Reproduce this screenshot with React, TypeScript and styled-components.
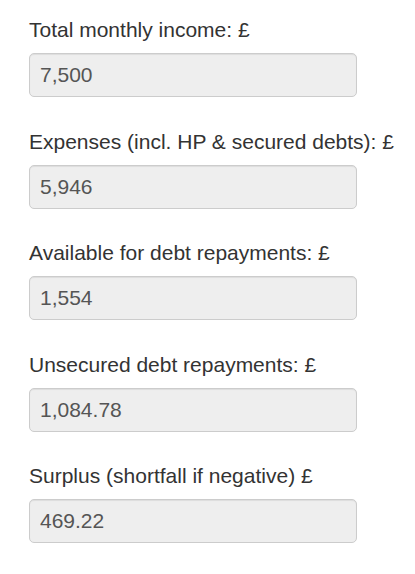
import styled, {createGlobalStyle} from "styled-components";

const GlobalStyle = createGlobalStyle`
  body {
    margin: 0;
    background-color: #ffffff;
    font-family: "Liberation Sans", Arial, sans-serif;
  }
`;

const fields = [
  {label: "Total monthly income: £", value: "7,500"},
  {label: "Expenses (incl. HP & secured debts): £", value: "5,946"},
  {label: "Available for debt repayments: £", value: "1,554"},
  {label: "Unsecured debt repayments: £", value: "1,084.78"},
  {label: "Surplus (shortfall if negative) £", value: "469.22"},
];

const App = () => {
  return (
    <>
      <GlobalStyle />
      <Form>
        {fields.map((field) => (
          <FormGroup key={field.label}>
            <Label>{field.label}</Label>
            <ReadonlyInput type="text" value={field.value} readOnly />
          </FormGroup>
        ))}
      </Form>
    </>
  );
};

const Form = styled.form`
  display: flex;
  flex-direction: column;
  gap: 32.5px;
  padding: 18px 0 0 29px;
`;

const FormGroup = styled.div`
  display: flex;
  flex-direction: column;
  gap: 11px;
`;

const Label = styled.label`
  font-size: 21px;
  line-height: 24px;
  color: #333333;
  white-space: nowrap;
`;

const ReadonlyInput = styled.input`
  box-sizing: border-box;
  width: 328px;
  height: 44px;
  margin: 0;
  padding: 0 10px;
  font-family: "Liberation Sans", Arial, sans-serif;
  font-size: 21px;
  color: #555555;
  background-color: #eeeeee;
  border: 1px solid #cccccc;
  border-radius: 5px;
  box-shadow: inset 0 1px 1px rgba(0, 0, 0, 0.075);
  outline: none;
`;

export default App;
